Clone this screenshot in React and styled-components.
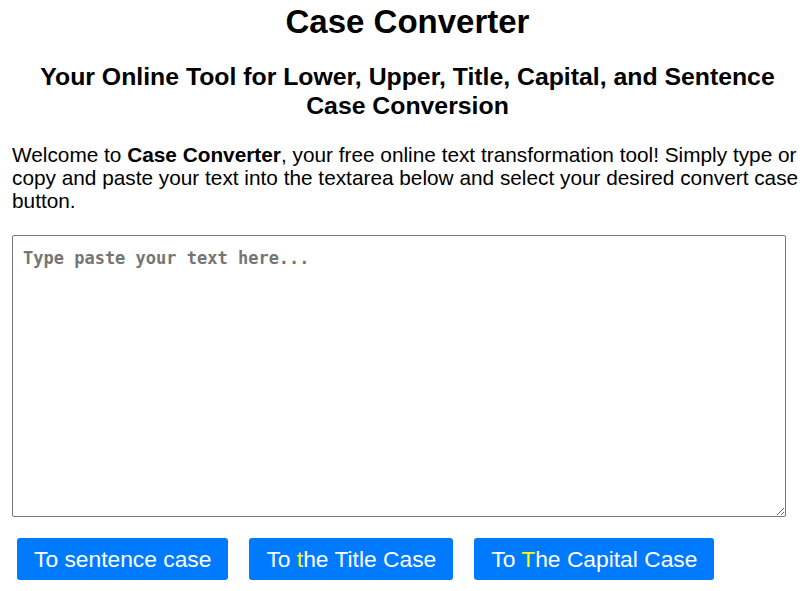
import styled, { createGlobalStyle } from 'styled-components'

const GlobalStyle = createGlobalStyle`
  body {
    margin: 0;
    background: #fff;
    font-family: "Liberation Sans", Arial, sans-serif;
    color: #000;
  }
`

const Page = styled.div`
  padding: 0 3px 0 12px;
`

const Title = styled.h1`
  margin: 4px 0 0;
  font-size: 33px;
  line-height: 36px;
  text-align: center;
`

const Subtitle = styled.h2`
  margin: 22px 0 0;
  font-size: 24.8px;
  line-height: 29px;
  text-align: center;
`

const Intro = styled.p`
  margin: 23px 0 0;
  font-size: 20.8px;
  line-height: 23px;
`

const TextArea = styled.textarea`
  display: block;
  box-sizing: border-box;
  margin-top: 23px;
  width: 774px;
  height: 282px;
  padding: 12px 10px 10px;
  border: 1px solid #767676;
  border-radius: 2px;
  font-family: "DejaVu Sans Mono", monospace;
  font-size: 17px;
  &::placeholder {
    color: #757575;
    font-weight: bold;
  }
`

const ButtonRow = styled.div`
  display: flex;
  gap: 21px;
  margin-top: 21px;
  padding-left: 5px;
`

const Button = styled.button`
  height: 42px;
  padding: 0 17px;
  border: none;
  border-radius: 3px;
  background: #007bff;
  color: #fff;
  font-family: "Liberation Sans", Arial, sans-serif;
  font-size: 22.8px;
  cursor: pointer;
`

const Mark = styled.span`
  color: #ffff00;
`

export default function App() {
  return (
    <Page>
      <GlobalStyle />
      <Title>Case Converter</Title>
      <Subtitle>Your Online Tool for Lower, Upper, Title, Capital, and Sentence Case Conversion</Subtitle>
      <Intro>
        Welcome to <b>Case Converter</b>, your free online text transformation tool! Simply type or copy and paste your text into the textarea below and select your desired convert case button.
      </Intro>
      <TextArea placeholder="Type paste your text here..." />
      <ButtonRow>
        <Button>To sentence case</Button>
        <Button>To <Mark>t</Mark>he Title Case</Button>
        <Button>To <Mark>T</Mark>he Capital Case</Button>
      </ButtonRow>
    </Page>
  )
}
